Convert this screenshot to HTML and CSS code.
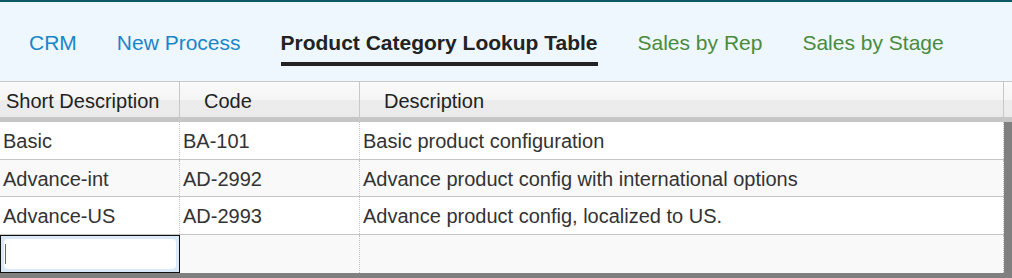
FILE: index.html
```html
<!DOCTYPE html>
<html lang="en">
  <head>
    <title>Product Category Lookup Table</title>
    <link rel="stylesheet" href="styles.css">
  </head>
  <body>
    <nav class="tabs">
      <a class="tab tab-blue">CRM</a>
      <a class="tab tab-blue">New Process</a>
      <a class="tab tab-active">Product Category Lookup Table</a>
      <a class="tab tab-green">Sales by Rep</a>
      <a class="tab tab-green">Sales by Stage</a>
    </nav>
    <div class="grid-area">
      <div class="grid-head">
        <div class="head-cell col-short">Short Description</div>
        <div class="head-cell col-code">Code</div>
        <div class="head-cell col-desc">Description</div>
        <div class="head-corner"></div>
      </div>
      <div class="grid-body">
        <div class="row">
          <div class="cell col-short">Basic</div>
          <div class="cell col-code">BA-101</div>
          <div class="cell col-desc">Basic product configuration</div>
        </div>
        <div class="row alt">
          <div class="cell col-short">Advance-int</div>
          <div class="cell col-code">AD-2992</div>
          <div class="cell col-desc">Advance product config with international options</div>
        </div>
        <div class="row">
          <div class="cell col-short">Advance-US</div>
          <div class="cell col-code">AD-2993</div>
          <div class="cell col-desc">Advance product config, localized to US.</div>
        </div>
        <div class="row alt new-row">
          <div class="cell col-short editing">
            <div class="editor">
              <div class="editor-field"><span class="caret"></span></div>
            </div>
          </div>
          <div class="cell col-code"></div>
          <div class="cell col-desc"></div>
        </div>
      </div>
    </div>
  </body>
</html>
```

FILE: styles.css
```css
html, body {
  height: 100%;
}

body {
  margin: 0;
  font-family: "Liberation Sans", Arial, sans-serif;
  background: #808080;
  overflow: hidden;
}

.tabs {
  display: flex;
  gap: 40px;
  height: 81px;
  padding-left: 29px;
  box-sizing: border-box;
  background: #edf7fd;
  border-top: 2px solid #0b5866;
}

.tab {
  font-size: 21px;
  padding-top: 29px;
  box-sizing: border-box;
  height: 60px;
  cursor: pointer;
}

.tab-blue {
  color: #1a86c8;
}

.tab-green {
  color: #4b8b3b;
}

.tab-active {
  color: #222;
  font-weight: bold;
  border-bottom: 4px solid #222;
  height: 64px;
}

.grid-area {
  background: #808080;
}

.grid-head {
  display: flex;
  height: 41px;
  border-top: 1px solid #c8c8c8;
  background: linear-gradient(#fafafa, #f5f5f5 45%, #ececec 46%, #eaeaea);
  box-shadow: inset 0 -5px 0 #c6c6c6, inset 0 -3px 0 #bdbdbd;
  box-sizing: border-box;
}

.head-cell {
  font-size: 20px;
  color: #222;
  padding-top: 8px;
  box-sizing: border-box;
  border-right: 1px solid #c8c8c8;
}

.head-corner {
  flex: 1;
}

.col-short {
  width: 180px;
}

.col-code {
  width: 180px;
}

.col-desc {
  width: 644px;
}

.head-cell.col-short {
  padding-left: 6px;
}

.head-cell.col-code,
.head-cell.col-desc {
  padding-left: 24px;
}

.grid-body {
  width: 1004px;
}

.row {
  display: flex;
  height: 37.5px;
  background: #fff;
  border-bottom: 1px solid #c6c6c6;
  box-sizing: border-box;
}

.row.alt {
  background: #f9f9f9;
}

.row.new-row {
  border-bottom: none;
  height: 38.5px;
}

.cell {
  font-size: 20px;
  color: #333;
  padding: 8px 0 0 3px;
  box-sizing: border-box;
  border-right: 1px dotted #c0c0c0;
  white-space: nowrap;
}

.cell.editing {
  padding: 0;
  border-right: none;
}

.editor {
  height: 38px;
  width: 180px;
  box-sizing: border-box;
  border: 1px solid #111;
  background: #d9e9f7;
  padding: 3px;
}

.editor-field {
  height: 100%;
  background: #fff;
  border-radius: 4px;
  padding: 5px 0 5px 1px;
  box-sizing: border-box;
}

.caret {
  display: block;
  width: 1px;
  height: 100%;
  background: #666;
}
```
